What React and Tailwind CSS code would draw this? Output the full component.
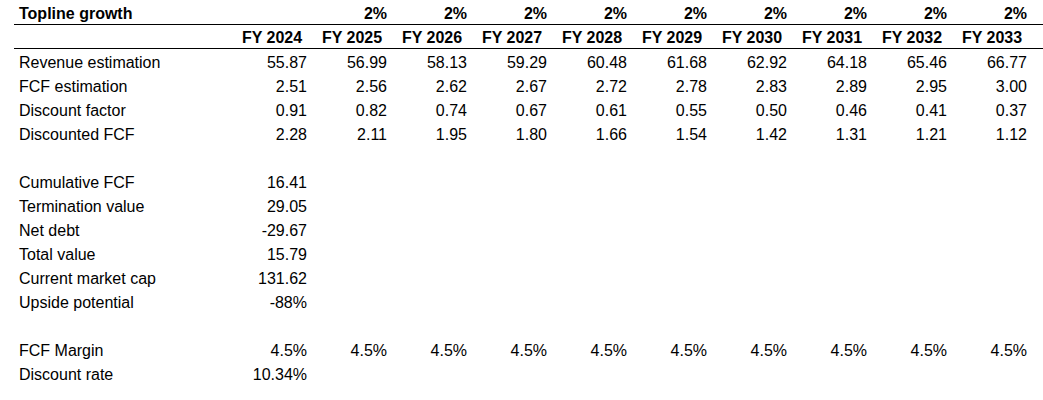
import React from "react";

const years = ["FY 2024", "FY 2025", "FY 2026", "FY 2027", "FY 2028", "FY 2029", "FY 2030", "FY 2031", "FY 2032", "FY 2033"];

const mainRows = [
  ["Revenue estimation", ["55.87", "56.99", "58.13", "59.29", "60.48", "61.68", "62.92", "64.18", "65.46", "66.77"]],
  ["FCF estimation", ["2.51", "2.56", "2.62", "2.67", "2.72", "2.78", "2.83", "2.89", "2.95", "3.00"]],
  ["Discount factor", ["0.91", "0.82", "0.74", "0.67", "0.61", "0.55", "0.50", "0.46", "0.41", "0.37"]],
  ["Discounted FCF", ["2.28", "2.11", "1.95", "1.80", "1.66", "1.54", "1.42", "1.31", "1.21", "1.12"]],
];

const summaryRows = [
  ["Cumulative FCF", ["16.41"]],
  ["Termination value", ["29.05"]],
  ["Net debt", ["-29.67"]],
  ["Total value", ["15.79"]],
  ["Current market cap", ["131.62"]],
  ["Upside potential", ["-88%"]],
];

const assumptionRows = [
  ["FCF Margin", Array(10).fill("4.5%")],
  ["Discount rate", ["10.34%"]],
];

function Row({ label, values }) {
  return (
    <div className="grid grid-cols-[218px_repeat(10,80px)] h-6 pt-[3px] items-center">
      <div className="pl-[5px]">{label}</div>
      {Array.from({ length: 10 }).map((_, i) => (
        <div key={i} className="text-right pr-[5px]">
          {values[i] ?? ""}
        </div>
      ))}
    </div>
  );
}

export default function App() {
  return (
    <div className="bg-white w-[1043px] h-[400px] pl-[14px] text-black text-[16px] leading-none font-['Liberation_Sans',Arial,sans-serif]">
      {/* title row */}
      <div className="grid grid-cols-[218px_repeat(10,80px)] h-[25px] pt-[3px] items-center border-b border-black font-bold">
        <div className="pl-[5px]">Topline growth</div>
        <div></div>
        {Array.from({ length: 9 }).map((_, i) => (
          <div key={i} className="text-right pr-[5px]">2%</div>
        ))}
      </div>
      {/* year header */}
      <div className="grid grid-cols-[218px_repeat(10,80px)] h-6 pt-[3px] items-center border-b border-black font-bold">
        <div></div>
        {years.map((y) => (
          <div key={y} className="text-center">{y}</div>
        ))}
      </div>

      {mainRows.map(([l, v]) => (
        <Row key={l} label={l} values={v} />
      ))}
      <div className="h-6" />
      {summaryRows.map(([l, v]) => (
        <Row key={l} label={l} values={v} />
      ))}
      <div className="h-6" />
      {assumptionRows.map(([l, v]) => (
        <Row key={l} label={l} values={v} />
      ))}
    </div>
  );
}
